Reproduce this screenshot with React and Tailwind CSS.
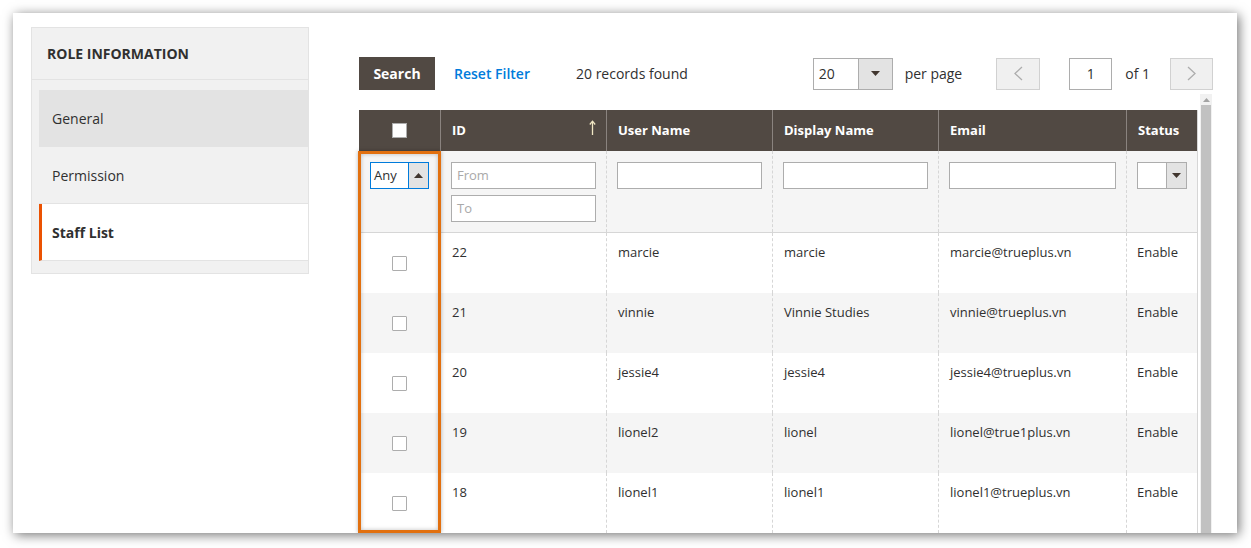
import React from "react";

const rows = [
  { id: "22", user: "marcie", display: "marcie", email: "marcie@trueplus.vn", status: "Enable" },
  { id: "21", user: "vinnie", display: "Vinnie Studies", email: "vinnie@trueplus.vn", status: "Enable" },
  { id: "20", user: "jessie4", display: "jessie4", email: "jessie4@trueplus.vn", status: "Enable" },
  { id: "19", user: "lionel2", display: "lionel", email: "lionel@true1plus.vn", status: "Enable" },
  { id: "18", user: "lionel1", display: "lionel1", email: "lionel1@trueplus.vn", status: "Enable" },
];

const cols = "grid grid-cols-[81px_166px_166px_166px_188px_72px]";

const Checkbox = ({ header }) => (
  <div
    className={
      header
        ? "w-[15px] h-[15px] bg-white border border-[#adadad]"
        : "w-[15px] h-[15px] bg-white border border-[#adadad] rounded-[1px]"
    }
  />
);

const Tri = ({ up }) => (
  <svg width="9" height="5" viewBox="0 0 9 5">
    {up ? <polygon points="0,5 9,5 4.5,0" fill="#41362f" /> : <polygon points="0,0 9,0 4.5,5" fill="#41362f" />}
  </svg>
);

const Chevron = ({ right }) => (
  <svg width="9" height="15" viewBox="0 0 9 15">
    <polyline
      points={right ? "1,1 8,7.5 1,14" : "8,1 1,7.5 8,14"}
      fill="none"
      stroke="#adadad"
      strokeWidth="1.3"
    />
  </svg>
);

const SortArrow = () => (
  <svg width="7" height="15" viewBox="0 0 7 15" className="-mt-[6px]">
    <line x1="3.5" y1="1.5" x2="3.5" y2="15" stroke="#f1e7c4" strokeWidth="1.3" />
    <polyline points="0.8,4.5 3.5,1.2 6.2,4.5" fill="none" stroke="#f1e7c4" strokeWidth="1.3" />
  </svg>
);

const Sidebar = () => (
  <div className="self-start w-[278px] shrink-0 bg-[#f1f1f1] border border-[#e3e3e3] pb-[12px] text-[14px] text-[#303030]">
    <div className="h-[52px] flex items-center px-[15px] border-b border-[#e3e3e3] font-bold">
      ROLE INFORMATION
    </div>
    <div className="mt-[10px] ml-[7px]">
      <div className="h-[57px] flex items-center pl-[13px] bg-[#e3e3e3]">General</div>
      <div className="h-[57px] flex items-center pl-[13px] border-b border-[#e3e3e3]">Permission</div>
      <div className="h-[57px] flex items-center pl-[10px] bg-white border-l-[3px] border-[#eb5202] border-b border-b-[#e3e3e3] font-bold">
        Staff List
      </div>
    </div>
  </div>
);

const Toolbar = () => (
  <div className="flex items-center h-[33px] text-[14px] text-[#303030]">
    <button className="h-[33px] w-[76px] bg-[#514943] text-white font-bold">Search</button>
    <span className="ml-[19px] text-[#007bdb] font-semibold">Reset Filter</span>
    <span className="ml-[46px]">20 records found</span>
    <div className="ml-auto flex items-center">
      <div className="flex h-[32px] w-[80px] border border-[#adadad] bg-white">
        <span className="flex-1 pl-[5px] flex items-center">20</span>
        <span className="w-[34px] bg-[#e3e3e3] border-l border-[#adadad] flex items-center justify-center">
          <Tri />
        </span>
      </div>
      <span className="ml-[12px]">per page</span>
      <div className="ml-[34px] w-[44px] h-[32px] bg-[#f0f0f0] border border-[#d1d1d1] flex items-center justify-center">
        <Chevron />
      </div>
      <div className="ml-[29px] w-[43px] h-[32px] bg-white border border-[#adadad] flex items-center justify-center">
        1
      </div>
      <span className="ml-[13px]">of 1</span>
      <div className="ml-[20px] w-[43px] h-[32px] bg-[#f0f0f0] border border-[#d1d1d1] flex items-center justify-center">
        <Chevron right />
      </div>
    </div>
  </div>
);

const Input = ({ w, placeholder }) => (
  <div
    className={`h-[27px] bg-white border border-[#adadad] flex items-center pl-[5px] text-[13px] text-[#a9a9a9] ${w}`}
  >
    {placeholder}
  </div>
);

const Table = () => (
  <div className="w-[839px] border-r border-[#d6d6d6] text-[13px] text-[#303030] relative">
    <div className={`${cols} h-[41px] bg-[#514943] text-white font-bold`}>
      <div className="flex items-center justify-center">
        <Checkbox header />
      </div>
      <div className="border-l border-[#8a837f] flex items-center justify-between pl-[11px] pr-[10px]">
        <span>ID</span>
        <SortArrow />
      </div>
      <div className="border-l border-[#8a837f] flex items-center px-[11px]">User Name</div>
      <div className="border-l border-[#8a837f] flex items-center px-[11px]">Display Name</div>
      <div className="border-l border-[#8a837f] flex items-center px-[11px]">Email</div>
      <div className="border-l border-[#8a837f] flex items-center px-[11px]">Status</div>
    </div>

    <div className={`${cols} h-[82px] bg-[#f5f5f5] border-b border-[#d6d6d6]`}>
      <div className="pt-[11px] px-[11px]">
        <div className="flex h-[27px] border border-[#007bdb] bg-white">
          <span className="flex-1 pl-[3px] flex items-center text-[13px] text-[#303030]">Any</span>
          <span className="w-[20px] bg-[#e3e3e3] border-l border-[#007bdb] flex items-center justify-center">
            <Tri up />
          </span>
        </div>
      </div>
      <div className="border-l border-dashed border-[#d6d6d6] pt-[11px] px-[10px] flex flex-col gap-[6px]">
        <Input w="w-[145px]" placeholder="From" />
        <Input w="w-[145px]" placeholder="To" />
      </div>
      <div className="border-l border-dashed border-[#d6d6d6] pt-[11px] px-[10px]">
        <Input w="w-[145px]" />
      </div>
      <div className="border-l border-dashed border-[#d6d6d6] pt-[11px] px-[10px]">
        <Input w="w-[145px]" />
      </div>
      <div className="border-l border-dashed border-[#d6d6d6] pt-[11px] px-[10px]">
        <Input w="w-[167px]" />
      </div>
      <div className="border-l border-dashed border-[#d6d6d6] pt-[11px] px-[10px]">
        <div className="flex h-[27px] w-[50px] border border-[#adadad] bg-white">
          <span className="flex-1" />
          <span className="w-[20px] bg-[#e3e3e3] border-l border-[#adadad] flex items-center justify-center">
            <Tri />
          </span>
        </div>
      </div>
    </div>

    {rows.map((r, i) => (
      <div key={r.id} className={`${cols} h-[60px] ${i % 2 ? "bg-[#f5f5f5]" : "bg-white"}`}>
        <div className="flex items-center justify-center">
          <Checkbox />
        </div>
        <div className="border-l border-dashed border-[#d6d6d6] px-[11px] pt-[10px] leading-[18px]">{r.id}</div>
        <div className="border-l border-dashed border-[#d6d6d6] px-[11px] pt-[10px] leading-[18px]">{r.user}</div>
        <div className="border-l border-dashed border-[#d6d6d6] px-[11px] pt-[10px] leading-[18px]">{r.display}</div>
        <div className="border-l border-dashed border-[#d6d6d6] px-[11px] pt-[10px] leading-[18px]">{r.email}</div>
        <div className="border-l border-dashed border-[#d6d6d6] px-[10px] pt-[10px] leading-[18px]">{r.status}</div>
      </div>
    ))}

    {/* highlight annotation over the checkbox column */}
    <div className="absolute left-[-1px] top-[41px] w-[83px] h-[382px] border-[3px] border-[#e2700f] shadow-[inset_0_0_4px_rgba(0,0,0,0.25),0_0_4px_rgba(0,0,0,0.3)]" />
  </div>
);

const Scrollbar = () => (
  <div className="w-[12px] shrink-0 flex flex-col items-center bg-[#f1f1f1]">
    <div className="h-[11px] flex items-center justify-center">
      <svg width="7" height="4" viewBox="0 0 7 4">
        <polygon points="0,4 7,4 3.5,0" fill="#a3a3a3" />
      </svg>
    </div>
    <div className="w-[10px] flex-1 bg-[#c1c1c1]" />
  </div>
);

export default function App() {
  return (
    <div className="w-[1251px] h-[548px] bg-white pt-[13px] pl-[13px] font-['Open_Sans',sans-serif]">
      <div className="w-[1224px] h-[520px] bg-white overflow-hidden shadow-[2px_2px_11px_rgba(0,0,0,0.55)] flex items-start pl-[18px] pt-[14px]">
        <Sidebar />
        <div className="ml-[50px] w-[854px] pt-[30px]">
          <Toolbar />
          <div className="flex gap-[2px] mt-[4px] h-[500px]">
            <div className="pt-[16px]">
              <Table />
            </div>
            <Scrollbar />
          </div>
        </div>
      </div>
    </div>
  );
}
